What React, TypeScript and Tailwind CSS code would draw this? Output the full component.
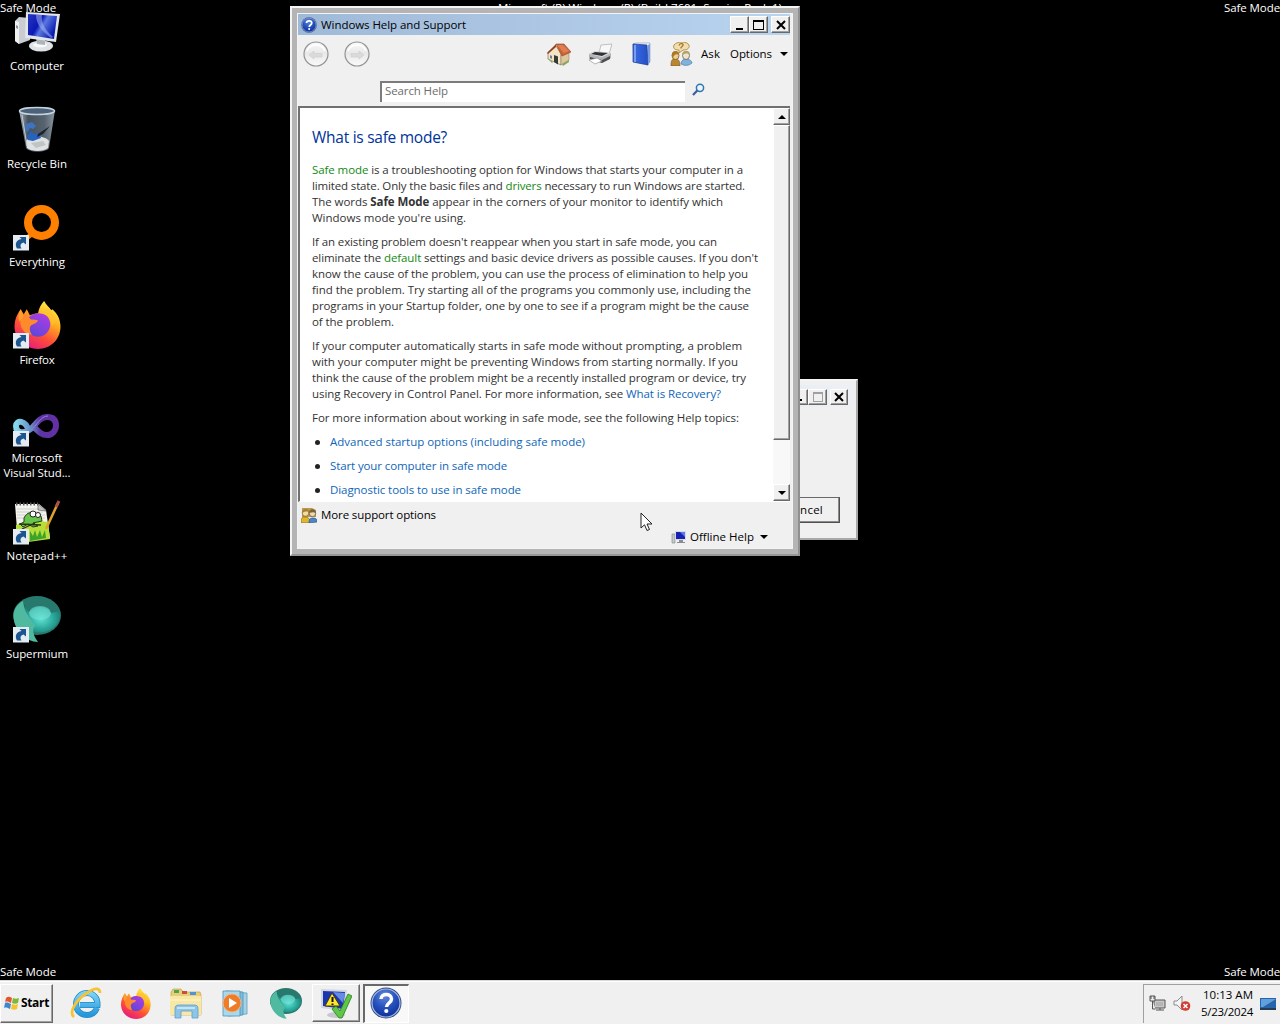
import React, { useLayoutEffect, useRef, useState } from "react";

/* Text run whose tracking is computed so that it fills a given width. */
function Fit({ w, className = "", children }: { w: number; className?: string; children: React.ReactNode }) {
  const ref = useRef<HTMLSpanElement>(null);
  const [ls, setLs] = useState(0);
  useLayoutEffect(() => {
    const el = ref.current;
    if (!el) return;
    const n = (el.textContent || "").length;
    setLs((w - el.getBoundingClientRect().width) / n);
  }, [w]);
  return (
    <span ref={ref} className={"inline-block whitespace-nowrap " + className} style={{ letterSpacing: ls + "px" }}>
      {children}
    </span>
  );
}

function Shortcut() {
  return (
    <g>
      <rect x="0" y="31" width="16" height="15.500" fill="#e4ebf2" />
      <path d="M4 44.500c-2.500-4-1-9 4.500-9.500l-2-2H13v7.500l-2.500-2C7 39.500 7 42 8.500 44.500z" fill="#1c5590" />
    </g>
  );
}

function ComputerIcon() {
  return (
    <svg viewBox="0 0 48 48" className="size-12 shrink-0">
      <defs>
        <linearGradient id="scr" x1="0" y1="0" x2="1" y2=".5">
          <stop offset="0" stopColor="#2836c0" /><stop offset=".45" stopColor="#0c18b4" /><stop offset=".6" stopColor="#5a78e0" /><stop offset="1" stopColor="#0a1cb0" />
        </linearGradient>
      </defs>
      <path d="M2 13l4-4 10 1 1 22-11 4-4-3z" fill="#c9cdd1" />
      <path d="M2 13l4 1v22l-4-3z" fill="#eef0f2" />
      <path d="M3 17l2 1v3l-2-1z" fill="#8a9094" />
      <ellipse cx="28" cy="38" rx="12" ry="5.500" fill="#dfe3e6" />
      <ellipse cx="27" cy="37" rx="7" ry="2.500" fill="#f8f9fa" />
      <path d="M23 30l9 1v6l-8-1z" fill="#aeb4b9" />
      <path d="M13 4l34 2-4 28-31-4z" fill="#e2e6ea" />
      <path d="M15 6l29 2-3 23-26-4z" fill="url(#scr)" />
      <path d="M23 7c0 8 5 16 15 23l2-1C31 21 28 14 29 7z" fill="#a9bff5" opacity=".5" />
    </svg>
  );
}

function BinIcon() {
  return (
    <svg viewBox="0 0 48 48" className="size-12 shrink-0">
      <defs>
        <linearGradient id="bin" x1="0" x2="1">
          <stop offset="0" stopColor="#a5b2bd" /><stop offset=".25" stopColor="#46525d" /><stop offset=".7" stopColor="#56626d" /><stop offset="1" stopColor="#8b98a2" />
        </linearGradient>
      </defs>
      <path d="M6 4h36l-6 38c-3 5-20 5-23 0z" fill="url(#bin)" />
      <path d="M13 35c4-6 19-6 23 0l-1 7c-4 4-17 4-21 0z" fill="#dfe2e3" />
      <path d="M18 37l12-2 3 4-10 3z" fill="#c1c4c5" />
      <ellipse cx="24" cy="5" rx="17.500" ry="3.500" fill="#4d6278" stroke="#c3d4df" strokeWidth="1.500" />
      <path d="M13 18l6-2 4 4-3 3-3-1-2 4-3-2z" fill="#3f73c0" />
      <path d="M14 30l4-5 3 3 5-1 2 5-8 3-5-1z" fill="#2762bd" />
      <path d="M25 28l12-8-7 8-6 3z" fill="#1a222d" />
      <path d="M9 9l5 31" stroke="#c3ccd3" strokeWidth="1" />
    </svg>
  );
}

function EverythingIcon() {
  return (
    <svg viewBox="0 0 48 48" className="size-12 shrink-0">
      <circle cx="28.500" cy="18.500" r="13.500" fill="none" stroke="#ff8000" strokeWidth="8" />
      <path d="M12 34l7-10 5 5-9 7z" fill="#ff8000" />
      <Shortcut />
    </svg>
  );
}

function Fox({ className }: { className: string }) {
  return (
    <svg viewBox="1 0 46 47" className={className}>
      <defs>
        <linearGradient id="fx" x1=".8" y1="0" x2=".25" y2="1">
          <stop offset="0" stopColor="#fff44f" /><stop offset=".35" stopColor="#ffae20" /><stop offset=".65" stopColor="#ff5035" /><stop offset="1" stopColor="#e31587" />
        </linearGradient>
        <linearGradient id="fp" x1=".8" y1="0" x2=".2" y2="1">
          <stop offset="0" stopColor="#b03be4" /><stop offset="1" stopColor="#5a48d8" />
        </linearGradient>
      </defs>
      <path d="M2 25c0-7 3-13 6-17l3 5 3-5 3 6c3-1 5-2 8-2 1-5 3-9 6-12 2 4 5 6 7 9l1-1c5 4 8 10 8 17 0 13-10 22-22 22S2 38 2 25z" fill="url(#fx)" />
      <path d="M15 19c1-4 5-7 11-7 7 0 11 5 11 11s-5 12-12 12-11-5-11-10z" fill="url(#fp)" />
      <path d="M8 15c5-1 8 0 10 3 3 0 5 0 7 1-1 3-5 3-7 5-2 3-1 6 1 9-7 0-13-6-11-18z" fill="#ff8a2b" />
      <path d="M8 8l3 7-4 5c-2-4-1-8 1-12z" fill="#ff9d2d" />
      <path d="M26 12c8 0 14 6 12 13 6-5 3-15-4-18z" fill="#ffc331" opacity=".7" />
    </svg>
  );
}

function FirefoxIcon() {
  return (
    <div className="relative size-12 shrink-0">
      <Fox className="absolute left-0 -top-px size-12" />
      <svg viewBox="0 0 48 48" className="absolute left-0 top-0 size-12"><Shortcut /></svg>
    </div>
  );
}

function VsIcon() {
  return (
    <svg viewBox="0 0 48 48" className="size-12 shrink-0">
      <defs>
        <linearGradient id="vs" x1="0" x2="1">
          <stop offset="0" stopColor="#84d8ec" /><stop offset=".38" stopColor="#668cc4" /><stop offset=".6" stopColor="#5c35a5" /><stop offset="1" stopColor="#6430a4" />
        </linearGradient>
      </defs>
      <path d="M16 32C13 19 3 20 3 26c0 8 9 8 16 2C25 21 28 17 34 17c6 0 9 3 9 8.500S39 35 34 35c-6 0-9-4-14-9" fill="none" stroke="url(#vs)" strokeWidth="6" />
      <path d="M18 30c6-4 9-14 17-14" fill="none" stroke="#a07cd5" strokeWidth="1" />
      <Shortcut />
    </svg>
  );
}

function NotepadIcon() {
  return (
    <svg viewBox="0 0 48 48" className="size-12 shrink-0">
      <path d="M2 6h24l7 6 4 28-32 4z" fill="#f4f4ef" />
      <path d="M4 11h22M4 14h26M4 17h28M4 20h28" stroke="#bcc0c2" strokeWidth=".7" />
      <path d="M3 6h22" stroke="#55595c" strokeWidth="3" strokeDasharray="1.500 2" />
      <path d="M25 6v6l8 1z" fill="#bfc3c6" stroke="#555" strokeWidth=".6" />
      <path d="M3 27c9-4 20-5 32-3l2 17-22 3-12-3z" fill="#b5df38" />
      <path d="M17 33l3 5 2-6 2 7 3-7 2 7 3-7 1 8-16 3z" fill="#3fa22b" />
      <path d="M11 20c3-6 8-7 11-3l6 1 1 5-9 2 5 3-5 1-5-3-5 3-3-3 4-2z" fill="#66c54a" stroke="#2b3b1f" strokeWidth="1" />
      <circle cx="20" cy="16" r="3" fill="#fff" stroke="#222" />
      <circle cx="25" cy="17" r="2.500" fill="#fff" stroke="#222" />
      <path d="M6 26l22 1M9 31l13-6" stroke="#273619" strokeWidth="1.300" />
      <path d="M45 5L33 31" stroke="#e0a02a" strokeWidth="2.500" />
      <path d="M46 3l-3 6" stroke="#a95342" strokeWidth="3" />
      <Shortcut />
    </svg>
  );
}

function Orb({ className }: { className: string }) {
  return (
    <svg viewBox="0 0 48 48" className={className}>
      <defs>
        <radialGradient id="orb" cx=".5" cy=".55" r=".65">
          <stop offset="0" stopColor="#61e3d5" /><stop offset=".5" stopColor="#2ba99c" /><stop offset="1" stopColor="#17695f" />
        </radialGradient>
      </defs>
      <ellipse cx="24" cy="19.500" rx="24" ry="19.500" fill="#27786d" />
      <path d="M9 6c6 5 4 11 9 9 9-8 17-2 20 2l9-2c2 22-26 28-36 14z" fill="url(#orb)" />
      <path d="M1 24C-1 15 4 8 10 5c1 8 3 12 7 17 2 3 3 6 6 8-4 1-4 8 2 16C13 46 2 34 1 24z" fill="#50baa0" />
      <ellipse cx="27" cy="17" rx="11" ry="7" fill="#73e2d5" opacity=".6" />
    </svg>
  );
}

function SupermiumIcon() {
  return (
    <div className="relative size-12 shrink-0">
      <Orb className="absolute left-0 top-0 size-12" />
      <svg viewBox="0 0 48 48" className="absolute left-0 top-0 size-12"><Shortcut /></svg>
    </div>
  );
}

function HelpBadge({ className }: { className: string }) {
  return (
    <svg viewBox="0 0 32 32" className={className}>
      <defs>
        <radialGradient id="hb" cx=".45" cy=".25" r=".8">
          <stop offset="0" stopColor="#6288dd" /><stop offset=".5" stopColor="#2652bd" /><stop offset="1" stopColor="#0b2c96" />
        </radialGradient>
      </defs>
      <circle cx="16" cy="16" r="15.500" fill="#34497e" />
      <circle cx="16" cy="16" r="14" fill="url(#hb)" stroke="#a9bce4" strokeWidth="1.200" />
      <path d="M11 12c0-6 10.500-6 10.500 0 0 4-5 4-5 8" fill="none" stroke="#fff" strokeWidth="3.500" />
      <circle cx="16.300" cy="24" r="2.100" fill="#fff" />
    </svg>
  );
}

function HomeIcon() {
  return (
    <svg viewBox="0 0 24 24" className="size-6 shrink-0">
      <path d="M1 10l8-6 5 8v11L1 17z" fill="#f2e4c5" stroke="#8c765a" strokeWidth=".7" />
      <path d="M14 13l8-3v8l-8 5z" fill="#dcc69c" stroke="#8c765a" strokeWidth=".5" />
      <path d="M9 2L0 11l1 1 8-7z" fill="#8f4327" />
      <path d="M9 2l8 0 7 8-9 4z" fill="#cb6338" stroke="#914025" strokeWidth=".6" />
      <path d="M10 3l6 0 6 6-5 2z" fill="#dd7f50" />
      <path d="M7 13l4 1.500v8L7 20z" fill="#333b3b" />
      <path d="M3 13l2 1v3l-2-1z" fill="#658695" />
      <path d="M0 16l6 4-1 1zm15 6l7-4v2l-6 4z" fill="#8aa55c" />
    </svg>
  );
}

function PrinterIcon() {
  return (
    <svg viewBox="0 0 24 24" className="size-6 shrink-0">
      <path d="M11 11l2-8 11-1-3 10z" fill="#f8f8f8" stroke="#aaa" strokeWidth=".7" />
      <path d="M1 12l6-3 16 2v5l-9 5-13-4z" fill="#b2b4b6" />
      <path d="M1 12l6-3 16 2-9 4z" fill="#dfe0e2" />
      <path d="M7 10l13 1-6 3-11-2z" fill="#303335" />
      <path d="M2 15l12 3 8-4v3l-8 4-12-4z" fill="#4b4f52" />
      <path d="M1 18l8-2 5 3-7 3z" fill="#fff" stroke="#888" strokeWidth=".6" />
    </svg>
  );
}

function BookIcon() {
  return (
    <svg viewBox="0 0 24 24" className="size-6 shrink-0">
      <defs><linearGradient id="bk"><stop offset="0" stopColor="#3b6de0" /><stop offset="1" stopColor="#2450c8" /></linearGradient></defs>
      <path d="M4 2l3-1h14v19l-2 2-14-2z" fill="#f4f6fb" stroke="#8895bb" strokeWidth=".6" />
      <path d="M4 2l14 1 1 20-15-3z" fill="url(#bk)" stroke="#1b398e" strokeWidth=".7" />
      <path d="M6 3v17" stroke="#8bb1ff" strokeWidth="1.500" />
      <path d="M19 3l2-1v18l-2 3z" fill="#799ae5" />
    </svg>
  );
}

function PeopleIcon({ className }: { className: string }) {
  return (
    <svg viewBox="0 0 24 24" className={className}>
      <path d="M5 3c3-4 13-4 15 0 1 4-3 5-6 5l-4 3V8C5 8 4 6 5 3z" fill="#f2deac" stroke="#a17d34" strokeWidth=".8" />
      <path d="M10 3.500c1-3 5-2 4 0l-2 2v1" fill="none" stroke="#a17526" strokeWidth="1.200" />
      <path d="M2 24c0-6 1-7 4-7s5 1 5 7z" fill="#b98734" stroke="#72531a" strokeWidth=".6" />
      <ellipse cx="6.500" cy="13.500" rx="3.500" ry="4" fill="#eccf93" stroke="#7a5a1d" strokeWidth=".8" />
      <path d="M3 14c-1-6 7-7 7-1-3-2-5 0-6 3z" fill="#ae7923" />
      <path d="M12 22c0-3 2-5 5-5s6 2 6 4c-3 3-8 3-11 1z" fill="#7fb2dc" stroke="#4076a4" strokeWidth=".6" />
      <ellipse cx="17" cy="13.500" rx="3.500" ry="4" fill="#f0e3cd" stroke="#67635c" strokeWidth=".8" />
      <path d="M13 13c0-5 8-6 8 0-2-2-4-2-8 0z" fill="#b5a26c" />
    </svg>
  );
}

function SupportIcon() {
  return (
    <svg viewBox="0 0 16 16" className="mr-1 size-4">
      <path d="M1 1h10l4 2v7H1z" fill="#b99b4e" />
      <path d="M0 16c0-5 1-6 4-6s5 1 5 6z" fill="#e2b52e" stroke="#7b5c16" strokeWidth=".6" />
      <circle cx="4.500" cy="6" r="3.300" fill="#f4dd9c" stroke="#8e6b38" strokeWidth=".8" />
      <path d="M1 6c0-5 7-5 7-1-3-1-5 0-7 1z" fill="#a8803a" />
      <path d="M8 16c0-4 1-5 4-5s4 1 4 4z" fill="#4b86c6" stroke="#264f80" strokeWidth=".6" />
      <circle cx="11.500" cy="6.500" r="3.200" fill="#efd6b0" stroke="#6e5c38" strokeWidth=".8" />
      <path d="M8 6c0-5 7-5 7 0-2-1-4-1-7 0z" fill="#7c6339" />
    </svg>
  );
}

function NavButton({ flip }: { flip?: boolean }) {
  return (
    <svg viewBox="0 0 26 26" className={flip ? "size-[26px] -scale-x-100" : "size-[26px]"}>
      <defs><linearGradient id="nb" x1="0" y1="0" x2="0" y2="1"><stop offset="0" stopColor="#f9f9f9" /><stop offset=".48" stopColor="#e8e8e8" /><stop offset="1" stopColor="#fafafa" /></linearGradient></defs>
      <circle cx="13" cy="13" r="12" fill="url(#nb)" stroke="#939393" strokeWidth="1.200" />
      <path d="M6 14l5-4v2.500h8v3.500h-8v2z" fill="#dadada" stroke="#cdcdcd" strokeWidth=".6" />
      <path d="M4 10c3-8 15-8 18 0" fill="none" stroke="#fff" strokeWidth="1.500" />
    </svg>
  );
}

const raised = "border-t border-l border-t-white border-l-white border-r border-b border-r-[#696969] border-b-[#696969] shadow-[inset_-1px_-1px_0_#a0a0a0] bg-[#f0f0f0] ";

function CloseX() {
  return <svg viewBox="0 0 10 10" className="size-[10px]"><path d="M1 1l8 8M9 1L1 9" stroke="#000" strokeWidth="2" /></svg>;
}

function Tri({ up }: { up?: boolean }) {
  return <svg viewBox="0 0 8 4" className={up ? "h-1 w-2 rotate-180" : "h-1 w-2"}><path d="M0 0h8L4 4z" fill="#000" /></svg>;
}

const desktop = [
  { icon: <ComputerIcon />, lines: [["Computer", 54]] },
  { icon: <BinIcon />, lines: [["Recycle Bin", 60]] },
  { icon: <EverythingIcon />, lines: [["Everything", 56]] },
  { icon: <FirefoxIcon />, lines: [["Firefox", 35]] },
  { icon: <VsIcon />, lines: [["Microsoft", 51], ["Visual Stud...", 67]] },
  { icon: <NotepadIcon />, lines: [["Notepad++", 61]] },
  { icon: <SupermiumIcon />, lines: [["Supermium", 62]] },
] as { icon: React.ReactNode; lines: [string, number][] }[];

function G({ children }: { children: React.ReactNode }) {
  return <span className="text-[#138a13]">{children}</span>;
}

const paragraphs: [React.ReactNode, number][][] = [
  [
    [<><G>Safe mode</G> is a troubleshooting option for Windows that starts your computer in a</>, 431],
    [<>limited state. Only the basic files and <G>drivers</G> necessary to run Windows are started.</>, 433],
    [<>The words <b>Safe Mode</b> appear in the corners of your monitor to identify which</>, 411],
    ["Windows mode you're using.", 154],
  ],
  [
    ["If an existing problem doesn't reappear when you start in safe mode, you can", 405],
    [<>eliminate the <G>default</G> settings and basic device drivers as possible causes. If you don't</>, 446],
    ["know the cause of the problem, you can use the process of elimination to help you", 436],
    ["find the problem. Try starting all of the programs you commonly use, including the", 439],
    ["programs in your Startup folder, one by one to see if a program might be the cause", 437],
    ["of the problem.", 82],
  ],
  [
    ["If your computer automatically starts in safe mode without prompting, a problem", 430],
    ["with your computer might be preventing Windows from starting normally. If you", 426],
    ["think the cause of the problem might be a recently installed program or device, try", 434],
    [<>using Recovery in Control Panel. For more information, see <span className="text-[#0f66b8]">What is Recovery?</span></>, 409],
  ],
  [["For more information about working in safe mode, see the following Help topics:", 427]],
];

const topics: [string, number][] = [
  ["Advanced startup options (including safe mode)", 255],
  ["Start your computer in safe mode", 177],
  ["Diagnostic tools to use in safe mode", 191],
];

function DialogWindow() {
  return (
    <div className="absolute left-[600px] top-[379px] flex h-[161px] w-[258px] flex-col justify-between border-2 border-[#f4f4f4] border-r-[#a8a8a8] border-b-[#a8a8a8] bg-[#f0f0f0] p-1">
      <div className="flex h-[22px] items-center justify-end bg-gradient-to-r from-[#dbe4ee] to-[#edf1f6] pr-[4px] pt-0.5">
        <div className={raised + "flex h-4 w-[18px] items-end justify-center pb-[3px]"}><div className="h-0.5 w-1.5 bg-black" /></div>
        <div className={raised + "flex h-4 w-[19px] items-center justify-center"}><div className="h-[10px] w-[10px] border border-t-2 border-[#a0a0a0]" /></div>
        <div className={raised + "ml-[3px] flex h-4 w-[18px] items-center justify-center"}><CloseX /></div>
      </div>
      <div className="mr-3 mb-[11px] flex h-[26px] w-[76px] items-center justify-end self-end border border-t-[#696969] border-l-white border-r-[#505050] border-b-[#505050] bg-[#f0f0f0] pr-[16px] shadow-[inset_-1px_-1px_0_#8c8c8c]">
        <Fit w={37} className="text-black">Cancel</Fit>
      </div>
    </div>
  );
}

function HelpWindow() {
  return (
    <div className="absolute left-[290px] top-[6px] flex h-[550px] w-[510px] border-2 border-t-[#f4f4f4] border-l-[#f4f4f4] border-r-[#8f8f8f] border-b-[#969696] bg-[#b4b4b4] p-[5px]">
      <div className="flex w-full flex-col border border-[#f4f4f4] bg-[#f0f0f0] pr-[2px]">
        {/* title bar */}
        <div className="flex h-[21px] shrink-0 items-center bg-gradient-to-r from-[#9fb9d8] to-[#b9d4ef] pl-[3px] text-black">
          <HelpBadge className="mr-1 size-4" />
          <Fit w={145}>Windows Help and Support</Fit>
          <div className="ml-auto flex">
            <div className={raised + "flex h-[17px] w-[19px] items-end justify-center pb-[2px]"}><div className="h-0.5 w-[7px] bg-black" /></div>
            <div className={raised + "flex h-[17px] w-[19px] items-center justify-center"}><div className="h-[10px] w-[11px] border border-t-2 border-black" /></div>
            <div className={raised + "ml-[3px] flex h-[17px] w-[19px] items-center justify-center"}><CloseX /></div>
          </div>
        </div>
        {/* toolbar */}
        <div className="flex h-[39px] shrink-0 items-center pb-px pl-[5px] text-black">
          <NavButton />
          <div className="ml-[15px] flex"><NavButton flip /></div>
          <div className="ml-[177px] flex items-center gap-[17px]">
            <HomeIcon /><PrinterIcon /><BookIcon />
          </div>
          <PeopleIcon className="ml-4 size-6 shrink-0" />
          <Fit w={19} className="ml-[8px]">Ask</Fit>
          <Fit w={42} className="ml-[10px]">Options</Fit>
          <div className="ml-2"><Tri /></div>
        </div>
        {/* search */}
        <div className="flex h-8 shrink-0 items-start pt-[7px] pl-[82px]">
          <div className="flex h-[21px] w-[305px] items-center border-t-2 border-l-2 border-[#7c7c7c] bg-white pl-[3px] pb-[3px] text-[#6d6d6d]">
            <Fit w={63}>Search Help</Fit>
          </div>
          <svg viewBox="0 0 13 13" className="ml-[7px] mt-0.5 size-[13px]">
            <circle cx="8" cy="4.800" r="3.600" fill="#e9f4fc" stroke="#3374ad" strokeWidth="1.500" />
            <path d="M5.300 7.500L1 12" stroke="#3a5f9e" strokeWidth="2.200" />
          </svg>
        </div>
        {/* article */}
        <div className="flex h-[396px] shrink-0 overflow-hidden border-t-2 border-l-2 border-[#707070] border-b border-b-white bg-white">
          <div className="flex grow flex-col pl-3 leading-4 text-[#333]">
            <Fit w={135} className="mt-[18px] mb-[14px] self-start text-[15.5px] leading-[22px] text-[#003399]">What is safe mode?</Fit>
            {paragraphs.map((p, i) => (
              <div key={i} className="mb-2 flex flex-col items-start">
                {p.map(([t, w], j) => <Fit key={j} w={w} className="h-4">{t}</Fit>)}
              </div>
            ))}
            {topics.map(([t, w]) => (
              <div key={t} className="mb-2 flex h-4 shrink-0 items-center pl-[3px]">
                <div className="mr-[10px] size-[5px] rounded-full bg-[#222]" />
                <Fit w={w} className="text-[#0f66b8]">{t}</Fit>
              </div>
            ))}
          </div>
          <div className="flex w-[17px] shrink-0 flex-col bg-[#f8f8f8]">
            <div className={raised + "flex h-[17px] items-center justify-center"}><Tri up /></div>
            <div className={raised + "h-[315px]"} />
            <div className={raised + "mt-auto flex h-[17px] items-center justify-center"}><Tri /></div>
          </div>
        </div>
        {/* footer */}
        <div className="flex h-[26px] shrink-0 items-center pl-[3px] text-black">
          <SupportIcon />
          <Fit w={115}>More support options</Fit>
        </div>
        <div className="flex h-[18px] items-center justify-end pr-[22px] text-black">
          <svg viewBox="0 0 16 14" className="mr-[3px] h-[14px] w-4">
            <path d="M1 4h3v9H1z" fill="#c5c9c9" stroke="#818686" strokeWidth=".6" />
            <path d="M4 1h11v9H4z" fill="#d8dce2" />
            <path d="M5 2h9v7H5z" fill="#1722b4" />
            <path d="M9 2h5v5z" fill="#5a7ae8" />
            <path d="M8 10h4v2h2v1H6v-1h2z" fill="#888e94" />
          </svg>
          <Fit w={64}>Offline Help</Fit>
          <div className="ml-[6px]"><Tri /></div>
        </div>
      </div>
    </div>
  );
}

function IeIcon() {
  return (
    <svg viewBox="0 0 32 32" className="size-8">
      <defs><linearGradient id="ie" x1="0" y1="0" x2="0" y2="1"><stop offset="0" stopColor="#7ad4f6" /><stop offset="1" stopColor="#2697dc" /></linearGradient></defs>
      <path d="M27 21c-2 5-6 7-10 7-7 0-11-5-11-11S11 6 17 6s11 5 10.500 12H10" fill="none" stroke="#2289c5" strokeWidth="6" />
      <path d="M27 21c-2 5-6 7-10 7-7 0-11-5-11-11S11 6 17 6s11 5 10.500 12H10" fill="none" stroke="url(#ie)" strokeWidth="4.500" />
      <path d="M4 30C-2 25 7 12 17 6 24 1 30 0 30 6" fill="none" stroke="#f5c335" strokeWidth="2.800" />
    </svg>
  );
}

function FolderIcon() {
  return (
    <svg viewBox="0 0 34 32" className="h-8 w-[34px]">
      <path d="M2 5l2-3h8l2 3h17l1 3v20H2z" fill="#e8ce78" stroke="#c4a54b" strokeWidth=".7" />
      <path d="M5 3h5v3H5z" fill="#4aa35a" /><path d="M13 4h5v3h-5z" fill="#c8503b" /><path d="M21 5h6v3h-6z" fill="#4e94d6" />
      <path d="M1 9h31v19H1z" fill="#f8e7a5" /><path d="M1 13h31" stroke="#fff7cd" />
      <path d="M6 31V22c0-3 1-4 4-4h15c3 0 4 1 4 4v9h-6v-7H12v7z" fill="#8dc4e8" stroke="#5ca0ce" strokeWidth=".8" />
      <path d="M8 21h18" stroke="#d7effb" strokeWidth="1.500" />
    </svg>
  );
}

function MediaIcon() {
  return (
    <svg viewBox="0 0 28 28" className="size-7">
      <path d="M9 3l17 1v21l-14 1z" fill="#a7d2e6" stroke="#5c9fbe" strokeWidth=".8" />
      <path d="M5 2l17 1v23l-15 1z" fill="#83bddb" stroke="#4a92b6" strokeWidth=".8" />
      <path d="M2 2h17v25H2z" fill="#a9d7ec" stroke="#4a92b6" strokeWidth=".8" />
      <circle cx="11" cy="14" r="9" fill="#ee7d29" stroke="#f6b47d" />
      <path d="M8 9l8 5-8 5z" fill="#fff" />
    </svg>
  );
}

function SafeConfigIcon() {
  return (
    <svg viewBox="0 0 32 32" className="size-8">
      <ellipse cx="16" cy="28" rx="9" ry="3" fill="#c5c8ca" />
      <path d="M1 2l26 1-2 21-24-3z" fill="#d2d8dd" /><path d="M3 4l22 1-2 17-20-3z" fill="#1c35b1" />
      <path d="M13 5l12 1-2 10z" fill="#668be2" />
      <path d="M12 6l8 13H5z" fill="#ffe62e" stroke="#443d06" /><path d="M12.500 10v5M12.500 16.500v1.500" stroke="#111" strokeWidth="2" />
      <path d="M12 22l4-3 4 5 8-17 4 2-10 22h-3z" fill="#5fc748" stroke="#287a23" strokeWidth=".8" />
    </svg>
  );
}

function Taskbar() {
  return (
    <div className="flex h-11 items-center border-t border-[#d8d8d8] bg-[#f0f0f0] pt-px text-black shadow-[inset_0_1px_0_white]">
      <div className={raised + "flex h-[39px] w-[53px] items-center pl-[3px]"}>
        <svg viewBox="0 0 16 16" className="mr-px size-4 shrink-0">
          <path d="M2 3c2-2 4-1 6 0L7 8C5 7 3 6 1 7z" fill="#e3572b" />
          <path d="M9 3c2 1 4 1 6 0l-1 5c-2 1-4 1-6 0z" fill="#7db83c" />
          <path d="M1 8c2-1 4 0 6 1l-1 5c-2-1-4-2-6-1z" fill="#3e86cd" />
          <path d="M8 9c2 1 4 1 6 0l-1 5c-2 1-4 1-6 0z" fill="#f3c42d" />
        </svg>
        <Fit w={28} className="text-[12px] font-bold">Start</Fit>
      </div>
      <div className="ml-[17px] flex h-[42px] items-center">
        <IeIcon />
        <Fox className="ml-[18px] size-[31px]" />
        <div className="ml-[18px]"><FolderIcon /></div>
        <div className="ml-[18px]"><MediaIcon /></div>
        <Orb className="ml-[21px] mt-0.5 size-8" />
        <div className={raised + "ml-[10px] flex h-[38px] w-[48px] items-center justify-center"}><SafeConfigIcon /></div>
        <div className="ml-[3px] flex h-[39px] w-[46px] items-center justify-center border-t-2 border-l-2 border-t-[#696969] border-l-[#696969] border-r border-b border-r-white border-b-white bg-[#f8f8f8] pr-0.5 pb-0.5"><HelpBadge className="size-8" /></div>
      </div>
      <div className="ml-auto flex h-[39px] w-[137px] items-center border-t border-l border-[#a0a0a0] pl-[5px]">
        <svg viewBox="0 0 17 17" className="size-[17px]">
          <path d="M5 5h11v8H5z" fill="#c7c9ca" stroke="#555" /><path d="M7 7h7v4H7z" fill="#b5b5b5" /><path d="M7 15h8M11 13v2" stroke="#555" />
          <path d="M1 1h5v5H1zM2 1v3M5 1v3M3.500 6v8h3" fill="#eee" stroke="#555" />
        </svg>
        <svg viewBox="0 0 18 17" className="ml-[7px] h-[17px] w-[18px]">
          <path d="M1 6h3l5-5v14l-5-5H1z" fill="#f4f4f4" stroke="#8c8c8c" />
          <circle cx="12.500" cy="11" r="4.800" fill="#d43b35" /><path d="M10.500 9l4 4M14.500 9l-4 4" stroke="#fff" strokeWidth="1.500" />
        </svg>
        <div className="ml-[9px] flex w-[53px] flex-col items-end pb-px leading-[17px]">
          <Fit w={50}>10:13 AM</Fit>
          <Fit w={52}>5/23/2024</Fit>
        </div>
        <svg viewBox="0 0 16 14" className="ml-[7px] h-[14px] w-4">
          <path d="M0 1h16v11H0z" fill="#2764a9" /><path d="M1 2h15L3 10H1z" fill="#5fa0dd" /><path d="M0 11h16v2H0z" fill="#263b55" />
        </svg>
      </div>
    </div>
  );
}

function Corner({ className }: { className: string }) {
  return <div className={"absolute h-4 leading-4 " + className}><Fit w={56}>Safe Mode</Fit></div>;
}

export default function App() {
  return (
    <div className="relative flex h-[1024px] w-[1280px] flex-col overflow-hidden bg-black font-['Open_Sans','Noto_Sans',sans-serif] text-[11.5px] leading-4 text-white">
      <div className="flex grow flex-col pt-2">
        {desktop.map((d) => (
          <div key={d.lines[0][0]} className="flex h-[98px] w-[74px] flex-col items-center">
            {d.icon}
            <div className="mt-0.5 flex flex-col items-center leading-[15px]">
              {d.lines.map(([t, w]) => <Fit key={t} w={w}>{t}</Fit>)}
            </div>
          </div>
        ))}
      </div>
      <Corner className="left-0 top-0" />
      <Corner className="right-0 top-0" />
      <Corner className="left-0 top-[964px]" />
      <Corner className="right-0 top-[964px]" />
      <div className="absolute left-[498px] top-0 h-4"><Fit w={284}>Microsoft (R) Windows (R) (Build 7601: Service Pack 1)</Fit></div>
      <DialogWindow />
      <HelpWindow />
      <svg viewBox="0 0 14 20" className="absolute left-[640px] top-[512px] h-5 w-[14px]">
        <path d="M1 1v15l3.500-3.200L7 18.500l2.500-1L7 12h5z" fill="#fff" stroke="#222" />
      </svg>
      <Taskbar />
    </div>
  );
}
